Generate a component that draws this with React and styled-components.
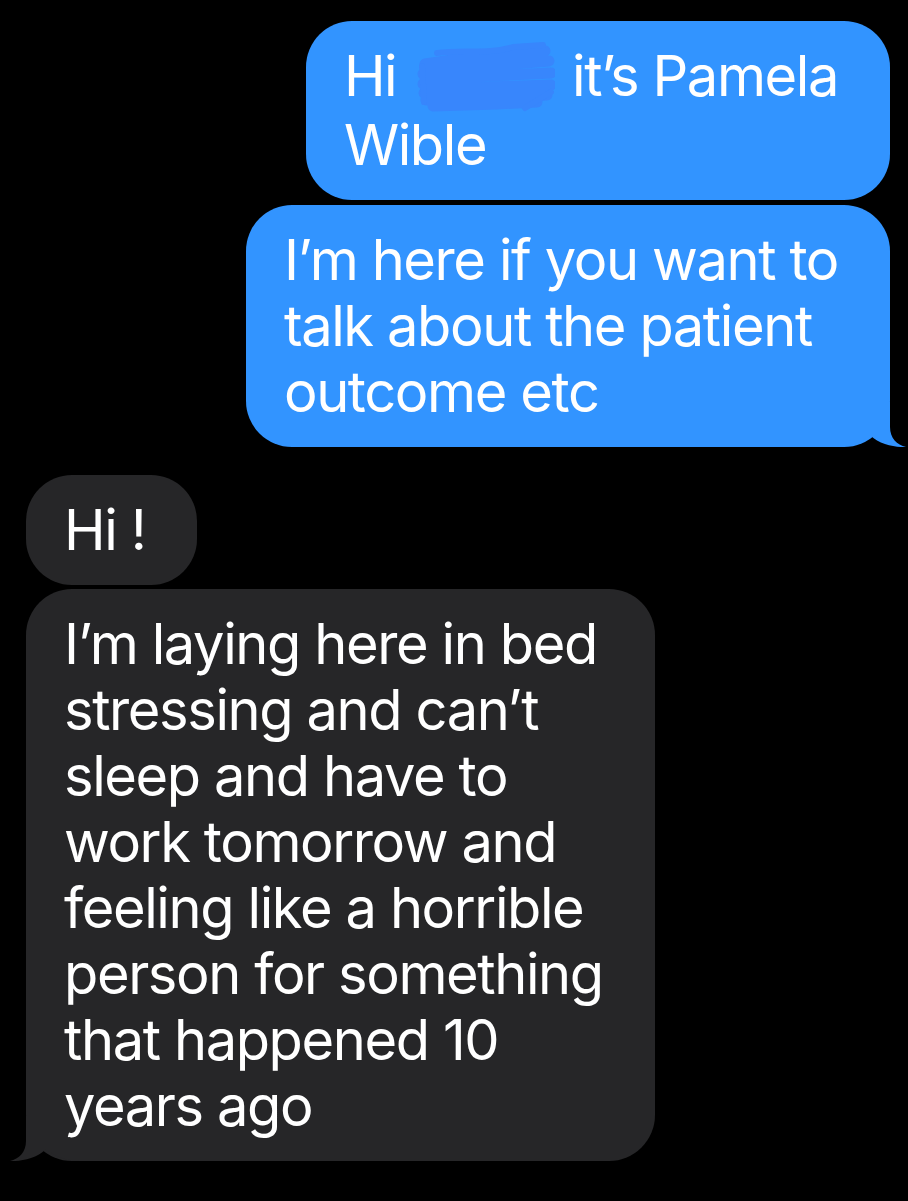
import styled, { createGlobalStyle } from "styled-components";

const GlobalStyle = createGlobalStyle`
	html, body {
		margin: 0;
		padding: 0;
		background: #000;
	}
`;

const Thread = styled.div`
	width: 908px;
	height: 1201px;
	box-sizing: border-box;
	padding: 21px 18px 0 26px;
	display: flex;
	flex-direction: column;
	font-family: Inter, "Liberation Sans", sans-serif;
	background: #000;
	overflow: hidden;
`;

const Bubble = styled.div`
	position: relative;
	align-self: ${(props) => (props.$mine ? "flex-end" : "flex-start")};
	margin-top: ${(props) => props.$gap || 0}px;
	padding: 22px 52px 22px 38px;
	border-radius: 46px;
	background: ${(props) => (props.$mine ? "#3294ff" : "#262628")};
	color: #fff;
	font-size: 56px;
	line-height: 66px;
	letter-spacing: -1.4px;
	white-space: pre;
`;

const Text = styled.span`
	position: relative;
	z-index: 1;
`;

const Tail = styled.svg`
	position: absolute;
	bottom: 0;
	width: 70px;
	height: 45px;
	right: ${(props) => (props.$side === "right" ? "-16px" : "auto")};
	left: ${(props) => (props.$side === "left" ? "-16px" : "auto")};
	transform: ${(props) => (props.$side === "left" ? "scaleX(-1)" : "none")};
`;

const Scribble = styled.svg`
	display: inline-block;
	width: 138px;
	height: 70px;
	vertical-align: top;
	margin: -1px 3px 0 6px;
`;

const BubbleTail = ({ side, color }) => (
	<Tail $side={side} viewBox="0 0 70 45">
		<path
			d="M54 0 L54 25 C54 36 61 43 70 45 C60 45.5 44 43 34 33 C26 40 14 45 0 45 L0 0 Z"
			fill={color}
		/>
	</Tail>
);

const App = () => {
	return (
		<>
			<GlobalStyle />
			<Thread>
				<Bubble $mine>
					<Text>
						{"Hi "}
						<Scribble viewBox="0 0 138 70">
							<g fill="none" stroke="#3886fc" strokeLinecap="round" strokeLinejoin="round">
								<path d="M8 22 L70 13 L128 9 M6 32 L80 23 L132 19 M6 42 L70 34 L134 31 M7 51 L74 45 L134 43 M9 58 L70 56 L130 53 M16 64 L80 62 L120 60" strokeWidth="11" />
								<path d="M20 11 C46 7 70 13 96 5 L126 3 M108 66 L134 50 M5 24 L7 60" strokeWidth="6" />
							</g>
						</Scribble>
						{" it\u2019s Pamela\nWible"}
					</Text>
				</Bubble>
				<Bubble $mine $gap={5}>
					<BubbleTail side="right" color="#3294ff" />
					<Text>{"I\u2019m here if you want to\ntalk about the patient\noutcome etc"}</Text>
				</Bubble>
				<Bubble $gap={28}>
					<Text>{"Hi !"}</Text>
				</Bubble>
				<Bubble $gap={4}>
					<BubbleTail side="left" color="#262628" />
					<Text>
						{
							"I\u2019m laying here in bed\nstressing and can\u2019t\nsleep and have to\nwork tomorrow and\nfeeling like a horrible\nperson for something\nthat happened 10\nyears ago"
						}
					</Text>
				</Bubble>
			</Thread>
		</>
	);
};

export default App;
